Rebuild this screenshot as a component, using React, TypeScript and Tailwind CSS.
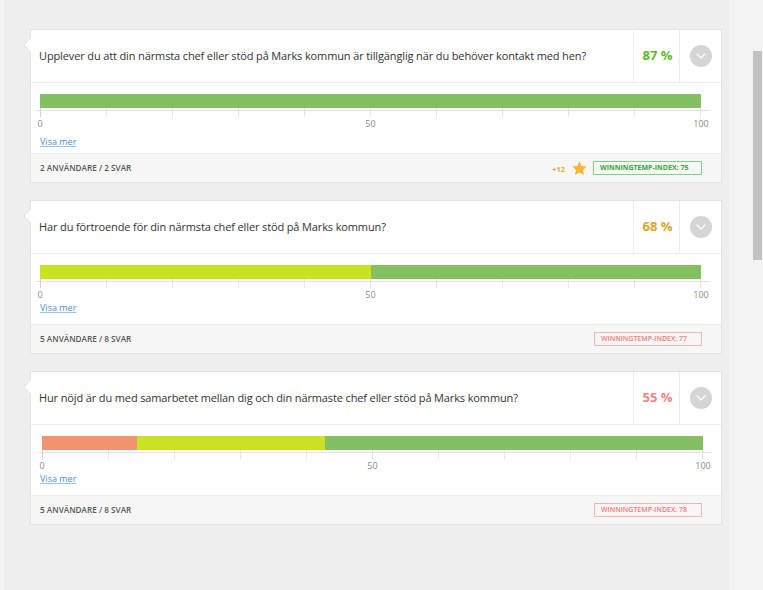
import React from 'react';

type Segment = { value: number; color: string };

type Question = {
  id: number;
  text: string;
  percent: number;
  percentColor: string;
  users: number;
  answers: number;
  index: number;
  indexTone: 'good' | 'bad';
  bonus?: number;
  segments: Segment[];
  shift?: boolean;
  compact?: boolean;
};

const GREEN = '#84c062';
const LIME = '#c9e224';
const ORANGE = '#f1936e';

const questions: Question[] = [
  {
    id: 1,
    text: 'Upplever du att din närmsta chef eller stöd på Marks kommun är tillgänglig när du behöver kontakt med hen?',
    percent: 87,
    percentColor: '#5db92c',
    users: 2,
    answers: 2,
    index: 75,
    indexTone: 'good',
    bonus: 12,
    segments: [{ value: 100, color: GREEN }],
  },
  {
    id: 2,
    text: 'Har du förtroende för din närmsta chef eller stöd på Marks kommun?',
    percent: 68,
    percentColor: '#dba51f',
    users: 5,
    answers: 8,
    index: 77,
    indexTone: 'bad',
    compact: true,
    segments: [
      { value: 50, color: LIME },
      { value: 50, color: GREEN },
    ],
  },
  {
    id: 3,
    text: 'Hur nöjd är du med samarbetet mellan dig och din närmaste chef eller stöd på Marks kommun?',
    percent: 55,
    percentColor: '#f28585',
    users: 5,
    answers: 8,
    index: 78,
    indexTone: 'bad',
    shift: true,
    compact: true,
    segments: [
      { value: 14.4, color: ORANGE },
      { value: 28.4, color: LIME },
      { value: 57.2, color: GREEN },
    ],
  },
];

function Chevron() {
  return (
    <div className="flex h-[22px] w-[22px] items-center justify-center rounded-full bg-[#d5d5d5]">
      <svg width="10" height="6" viewBox="0 0 10 6" fill="none">
        <path d="M1 1l4 4 4-4" stroke="#fff" strokeWidth="1.2" strokeLinecap="round" strokeLinejoin="round" />
      </svg>
    </div>
  );
}

function Star() {
  return (
    <svg width="17" height="17" viewBox="0 0 24 24">
      <path
        d="M12 1.8l3.1 6.6 7.1.9-5.2 4.9 1.4 7.1L12 17.8l-6.4 3.5 1.4-7.1-5.2-4.9 7.1-.9z"
        fill="#f7b633"
      />
    </svg>
  );
}

function Chart({ segments, shift }: { segments: Segment[]; shift?: boolean }) {
  return (
    <div className={shift ? 'pl-[11px]' : 'pl-[9px]'}>
      <div className="relative h-[23px] w-[661px]">
        {/* gridlines */}
        <div className="absolute inset-0 grid grid-cols-10 border-r border-[#e6e6e6]">
          {Array.from({ length: 10 }).map((_, i) => (
            <div key={i} className={i === 0 ? 'border-l border-[#cfcfcf]' : 'border-l border-[#e6e6e6]'} />
          ))}
        </div>
        {/* axis */}
        <div className="absolute left-[-4px] right-[-9px] top-[16px] h-px bg-[#e2e2e2]" />
        <div className="relative flex h-[14px] w-full">
          {segments.map((s, i) => (
            <div key={i} className="h-full" style={{ width: `${s.value}%`, backgroundColor: s.color }} />
          ))}
        </div>
      </div>
      <div className="relative h-[14px] w-[661px] text-[9px] leading-[14px] text-[#8a8a8a]">
        <span className="absolute left-0 -translate-x-1/2">0</span>
        <span className="absolute left-1/2 -translate-x-1/2">50</span>
        <span className="absolute left-full -translate-x-1/2">100</span>
      </div>
    </div>
  );
}

function QuestionCard({ q }: { q: Question }) {
  const good = q.indexTone === 'good';
  return (
    <div className="relative w-[692px] border border-[#e3e3e3] bg-white">
      <div className="absolute left-[-6px] top-[10px] h-[10px] w-[10px] rotate-45 border-b border-l border-[#e3e3e3] bg-white" />
      <div className="relative flex h-[53px] border-b border-[#ececec]">
        <div className="flex flex-1 items-center pl-[8px] text-[11px] tracking-[-0.13px] text-[#333]">{q.text}</div>
        <div
          className="flex w-[46px] items-center justify-center border-l border-[#ececec] pl-[2px] text-[13px] font-bold"
          style={{ color: q.percentColor }}
        >
          {q.percent} %
        </div>
        <div className="flex w-[42px] items-center justify-center border-l border-[#ececec]">
          <Chevron />
        </div>
      </div>
      <div className={q.compact ? 'pt-[11px] pb-[9px]' : 'pt-[11px] pb-[4px]'}>
        <Chart segments={q.segments} shift={q.shift} />
        <div className={q.compact ? 'mt-[-1px] pl-[9px] text-[9px] leading-[14px]' : 'mt-[4px] pl-[9px] text-[9px] leading-[14px]'}>
          <a href="#" className="text-[#4d8fcf] underline decoration-[#9cc0e4]">
            Visa mer
          </a>
        </div>
      </div>
      <div className="flex h-[29px] items-center border-t border-[#ececec] bg-[#f7f7f7] pl-[9px] pr-[19px]">
        <div className="flex-1 text-[8.2px] font-semibold uppercase text-[#585858]">
          {q.users} användare / {q.answers} svar
        </div>
        {q.bonus !== undefined && (
          <div className="mr-[5px] flex items-center gap-[6px]">
            <span className="mt-[3px] text-[7.5px] font-bold text-[#f0a62a]">+{q.bonus}</span>
            <Star />
          </div>
        )}
        <div
          className={
            good
              ? 'flex h-[14px] w-[109px] items-center border border-[#7fd384] pl-[6px] text-[7px] font-bold text-[#38a83a]'
              : 'flex h-[14px] w-[108px] items-center border border-[#f6b4b4] pl-[6px] text-[7px] font-semibold text-[#f27b7b]'
          }
        >
          WINNINGTEMP-INDEX: {q.index}
        </div>
      </div>
    </div>
  );
}

export default function App() {
  return (
    <div className="flex h-[590px] w-[763px] overflow-hidden bg-[#f3f3f3]" style={{ fontFamily: '"Open Sans", "Liberation Sans", sans-serif' }}>
      <div className="ml-[4px] flex w-[725px] flex-col gap-[17px] bg-[#eeeeee] pl-[26px] pt-[29px]">
        {questions.map((q) => (
          <QuestionCard key={q.id} q={q} />
        ))}
      </div>
      <div className="flex flex-1 justify-end pr-[1px]">
        <div className="mt-[51px] h-[209px] w-[9px] bg-[#c2c2c2]" />
      </div>
    </div>
  );
}
